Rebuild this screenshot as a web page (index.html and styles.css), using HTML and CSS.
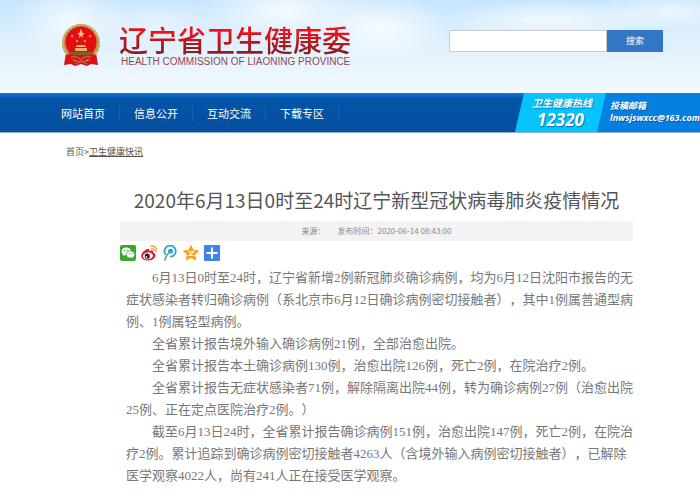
FILE: index.html
```
<!DOCTYPE html>
<html lang="zh-CN">
<head>
    <meta charset="UTF-8">
    <meta name="viewport" content="width=device-width, initial-scale=1.0">
    <title>2020年6月13日0时至24时辽宁新型冠状病毒肺炎疫情情况</title>
    <link rel="stylesheet" href="styles.css">
</head>
<body>
    <header class="header">
        <svg class="emblem" viewBox="0 0 40 44" aria-hidden="true">
            <path d="M5 30 L3 42 L10 41 L14 43 L20 41 L26 43 L30 41 L37 42 L35 30 Z" fill="#d8131a"/>
            <circle cx="20" cy="20" r="19" fill="#b8924e"/>
            <circle cx="20" cy="20" r="18" fill="none" stroke="#d9bd7c" stroke-width="1.5" stroke-dasharray="3 1"/>
            <circle cx="20" cy="19" r="15.5" fill="#e30d12"/>
            <path d="M20 5.500 L21.500 10 L24 10.500 L21.500 12 L22 15 L20 13 L18 15 L18.500 12 L16 10.500 L18.500 10 Z" fill="#f0c878"/>
            <g fill="#d98a4a">
                <circle cx="11" cy="13" r="1.200"/>
                <circle cx="29" cy="13" r="1.200"/>
                <circle cx="16" cy="18" r="1.200"/>
                <circle cx="24" cy="18" r="1.200"/>
            </g>
            <path d="M16 22 H24 L25 24 H15 Z M14 25 H26 V28 H14 Z" fill="#e8b46c"/>
            <path d="M7 29 H33 L31 32 H9 Z" fill="#8c5a2c"/>
            <path d="M5 32 Q12 30 16 34 Q20 30 24 34 Q28 30 35 32 L34 38 Q27 35 24 38 H16 Q13 35 6 38 Z" fill="#e30d12"/>
            <path d="M10 34 Q16 32 20 37 Q24 32 30 34 M14 41 Q20 36 26 41" fill="none" stroke="#a86b3a" stroke-width="1.500"/>
        </svg>
        <div class="brand">
            <div class="brand-cn">辽宁省卫生健康委</div>
            <div class="brand-en">HEALTH COMMISSION OF LIAONING PROVINCE</div>
        </div>
        <form class="search">
            <input type="text" class="search-input" aria-label="搜索内容">
            <button type="submit" class="search-btn">搜索</button>
        </form>
    </header>

    <nav class="nav">
        <ul class="menu">
            <li><a href="#">网站首页</a></li>
            <li><a href="#">信息公开</a></li>
            <li><a href="#">互动交流</a></li>
            <li><a href="#">下载专区</a></li>
        </ul>
        <div class="contact">
            <div class="hotline">
                <span class="hotline-label">卫生健康热线</span>
                <span class="hotline-number">12320</span>
            </div>
            <div class="mail">
                <span>投稿邮箱</span>
                <span>lnwsjswxcc@163.com</span>
            </div>
        </div>
    </nav>

    <div class="crumbs"><a href="#">首页</a>&gt;<a href="#" class="current">卫生健康快讯</a></div>

    <main class="article">
        <h1>2020年6月13日0时至24时辽宁新型冠状病毒肺炎疫情情况</h1>
        <div class="meta"><span>来源：</span><span>发布时间：2020-06-14 08:43:00</span></div>
        <div class="share">
            <a href="#" aria-label="微信">
                <svg viewBox="0 0 16 16">
                    <rect width="16" height="16" rx="2" fill="#36a927"/>
                    <path d="M6.300 2.500 C3.500 2.500 1.500 4.200 1.500 6.400 C1.500 7.700 2.200 8.800 3.200 9.500 L2.800 11 L4.600 10.100 C5.200 10.300 5.700 10.300 6.300 10.300 C9 10.300 11 8.500 11 6.400 C11 4.200 9 2.500 6.300 2.500 Z" fill="#fff"/>
                    <path d="M10.500 6 C8 6 6.300 7.500 6.300 9.500 C6.300 11.500 8 13 10.500 13 L12 12.800 L13.500 13.600 L13.200 12.200 C14.200 11.500 14.800 10.600 14.800 9.500 C14.800 7.500 13 6 10.500 6 Z" fill="#fff" stroke="#36a927" stroke-width=".7"/>
                    <g fill="#36a927">
                        <circle cx="4.700" cy="5.500" r=".7"/><circle cx="7.800" cy="5.500" r=".7"/>
                        <circle cx="9.200" cy="8.700" r=".6"/><circle cx="12" cy="8.700" r=".6"/>
                    </g>
                </svg>
            </a>
            <a href="#" aria-label="新浪微博">
                <svg viewBox="0 0 16 16">
                    <path d="M6.500 4 C8 3.600 8.600 4.600 8.200 6 C10.500 5.200 12.400 5.500 12 7.500 C14 8.200 15 9.500 14.200 11.500 C13.200 14 10.500 15.500 7 15.500 C3 15.500 .3 13.600 .3 10.900 C.3 8 4 4.600 6.500 4 Z" fill="#e0162b"/>
                    <ellipse cx="6.900" cy="10.900" rx="5" ry="3.500" fill="#fff" transform="rotate(-8 6.900 10.900)"/>
                    <circle cx="6.300" cy="11.100" r="2.600" fill="#1c1213"/>
                    <circle cx="5.500" cy="11.800" r=".9" fill="#fff"/>
                    <circle cx="7.200" cy="10.600" r=".4" fill="#fff"/>
                    <path d="M10 1.200 C13.500 .4 16 3.200 15 6.500 M10.500 3.700 C12.200 3.400 13.300 4.500 12.900 6" fill="none" stroke="#f5a133" stroke-width="1.400" stroke-linecap="round"/>
                </svg>
            </a>
            <a href="#" aria-label="腾讯微博">
                <svg viewBox="0 0 16 16">
                    <path d="M3.300 9 A5.600 5.600 0 1 1 8.800 11.700" fill="none" stroke="#2ba3d9" stroke-width="1.800" stroke-linecap="round"/>
                    <circle cx="8.500" cy="6.200" r="2.500" fill="#2ba3d9"/>
                    <path d="M7.500 7.500 C5 9.500 3.500 12 3 15" fill="none" stroke="#5cb98a" stroke-width="1.800" stroke-linecap="round"/>
                </svg>
            </a>
            <a href="#" aria-label="QQ空间">
                <svg viewBox="0 0 16 16">
                    <path d="M8 .6 L10.200 5.400 L15.500 6 L11.600 9.600 L12.700 15 L8 12.300 L3.300 15 L4.400 9.600 L.5 6 L5.800 5.400 Z" fill="#f9a11b" stroke="#f9a11b" stroke-linejoin="round"/>
                    <path d="M5 6.800 H10.500 L6 10.500 H11.500" fill="none" stroke="#fff" stroke-width="1.100"/>
                </svg>
            </a>
            <a href="#" aria-label="更多分享">
                <svg viewBox="0 0 16 16">
                    <rect width="16" height="16" rx="1" fill="#3d86e8"/>
                    <path d="M8 2.500 V13.500 M2.500 8 H13.500" stroke="#fff" stroke-width="2"/>
                </svg>
            </a>
        </div>
        <div class="text">
            <p>6月13日0时至24时，辽宁省新增2例新冠肺炎确诊病例，均为6月12日沈阳市报告的无症状感染者转归确诊病例（系北京市6月12日确诊病例密切接触者），其中1例属普通型病例、1例属轻型病例。</p>
            <p>全省累计报告境外输入确诊病例21例，全部治愈出院。</p>
            <p>全省累计报告本土确诊病例130例，治愈出院126例，死亡2例，在院治疗2例。</p>
            <p>全省累计报告无症状感染者71例，解除隔离出院44例，转为确诊病例27例（治愈出院25例、正在定点医院治疗2例。）</p>
            <p>截至6月13日24时，全省累计报告确诊病例151例，治愈出院147例，死亡2例，在院治疗2例。累计追踪到确诊病例密切接触者4263人（含境外输入病例密切接触者），已解除医学观察4022人，尚有241人正在接受医学观察。</p>
        </div>
    </main>
</body>
</html>
```
FILE: styles.css
```
* {
    box-sizing: border-box;
}
body {
    margin: 0;
    font-family: "Noto Sans CJK SC", sans-serif;
    background-color: #fff;
    color: #555;
}
a {
    color: inherit;
    text-decoration: none;
}

/* 页头：天空背景 */
.header {
    display: flex;
    align-items: center;
    min-height: 93px;
    padding: 0 37px 4px 61px;
    background:
        radial-gradient(ellipse 60px 40px at 70px 20px, rgba(255, 255, 255, 0.7), transparent),
        radial-gradient(ellipse 70px 26px at 155px 22px, rgba(255, 255, 255, 0.4), transparent),
        radial-gradient(ellipse 90px 34px at 285px 10px, rgba(255, 255, 255, 0.8), transparent),
        radial-gradient(ellipse 70px 36px at 380px 28px, rgba(255, 255, 255, 0.8), transparent),
        radial-gradient(ellipse 110px 20px at 550px 20px, rgba(255, 255, 255, 0.7), transparent),
        radial-gradient(ellipse 80px 20px at 670px 12px, rgba(255, 255, 255, 0.6), transparent),
        linear-gradient(#c6e5fd, #dff0fd 45%, #f3f9fe);
}
.emblem {
    width: 40px;
    height: 44px;
    flex: none;
}
.brand {
    margin-left: 18px;
    white-space: nowrap;
}
.brand-cn {
    font-size: 29px;
    font-weight: 500;
    line-height: 34px;
    background: linear-gradient(#f0101a 30%, #8e1c20 85%);
    background-clip: text;
    -webkit-background-clip: text;
    color: transparent;
}
.brand-en {
    padding-left: 2px;
    font-family: "Liberation Sans", Arial, sans-serif;
    font-size: 10px;
    line-height: 12px;
    color: #93474d;
}
.search {
    display: flex;
    width: 214px;
    margin: 0 0 8px auto;
}
.search-input {
    flex: 1;
    min-width: 0;
    height: 22px;
    border: 1px solid #ccc;
    background-color: #fff;
}
.search-btn {
    width: 56px;
    height: 22px;
    padding: 0;
    border: none;
    background-color: #3277c5;
    color: #fff;
    font-family: inherit;
    font-size: 9px;
}

/* 导航 */
.nav {
    display: flex;
    justify-content: space-between;
    height: 40px;
    padding-left: 47px;
    background: linear-gradient(#0d7be4, #0554a8 14%, #044f9f);
    border-bottom: 1px solid #8fb3d6;
    color: #fff;
}
.menu {
    display: flex;
    align-items: center;
    margin: 0;
    padding: 0;
    list-style: none;
    font-size: 11px;
    line-height: 16px;
}
.menu li {
    padding: 0 14px;
    border-right: 1px solid #1263c0;
}
.contact {
    display: flex;
    width: 185px;
    background-color: #0580e0;
    clip-path: polygon(9px 0, 100% 0, 100% 100%, 0 100%);
    font-weight: bold;
    font-style: italic;
    text-shadow: 1px 1px 1px rgba(0, 50, 110, 0.5);
}
.hotline {
    display: flex;
    flex-direction: column;
    align-items: center;
    width: 91px;
    padding-top: 2px;
    background-color: #04c4fb;
    clip-path: polygon(0 0, 100% 0, calc(100% - 9px) 100%, 0 100%);
}
.hotline-label {
    padding-left: 3px;
    font-size: 10px;
    line-height: 15px;
}
.hotline-number {
    font-family: "Noto Sans", sans-serif;
    font-size: 17px;
    line-height: 20px;
}
.mail {
    display: flex;
    flex-direction: column;
    padding: 7px 0 0 4px;
    font-family: "Open Sans", "Noto Sans CJK SC", sans-serif;
    font-size: 9px;
    line-height: 12px;
}

/* 面包屑 */
.crumbs {
    padding: 12px 0 0 66px;
    font-size: 9px;
    line-height: 14px;
}
.crumbs .current {
    text-decoration: underline;
}

/* 正文 */
.article {
    margin: 28px 67px 0 120px;
}
.article h1 {
    margin: 0;
    font-size: 19px;
    font-weight: 400;
    line-height: 26px;
    text-align: center;
    white-space: nowrap;
}
.meta {
    display: flex;
    justify-content: center;
    gap: 12px;
    margin-top: 8px;
    background-color: #f3f3f3;
    color: #888;
    font-size: 8px;
    line-height: 20px;
}
.share {
    display: flex;
    gap: 5px;
    padding-top: 4px;
}
.share svg {
    display: block;
    width: 16px;
    height: 16px;
}
.text {
    margin-top: 6px;
    padding-left: 6px;
    font-family: "Liberation Serif", "Noto Sans CJK SC", serif;
    font-size: 13px;
    line-height: 22px;
    color: #777;
    text-spacing-trim: space-all;
}
.text p {
    margin: 0;
    text-indent: 2em;
}
```
